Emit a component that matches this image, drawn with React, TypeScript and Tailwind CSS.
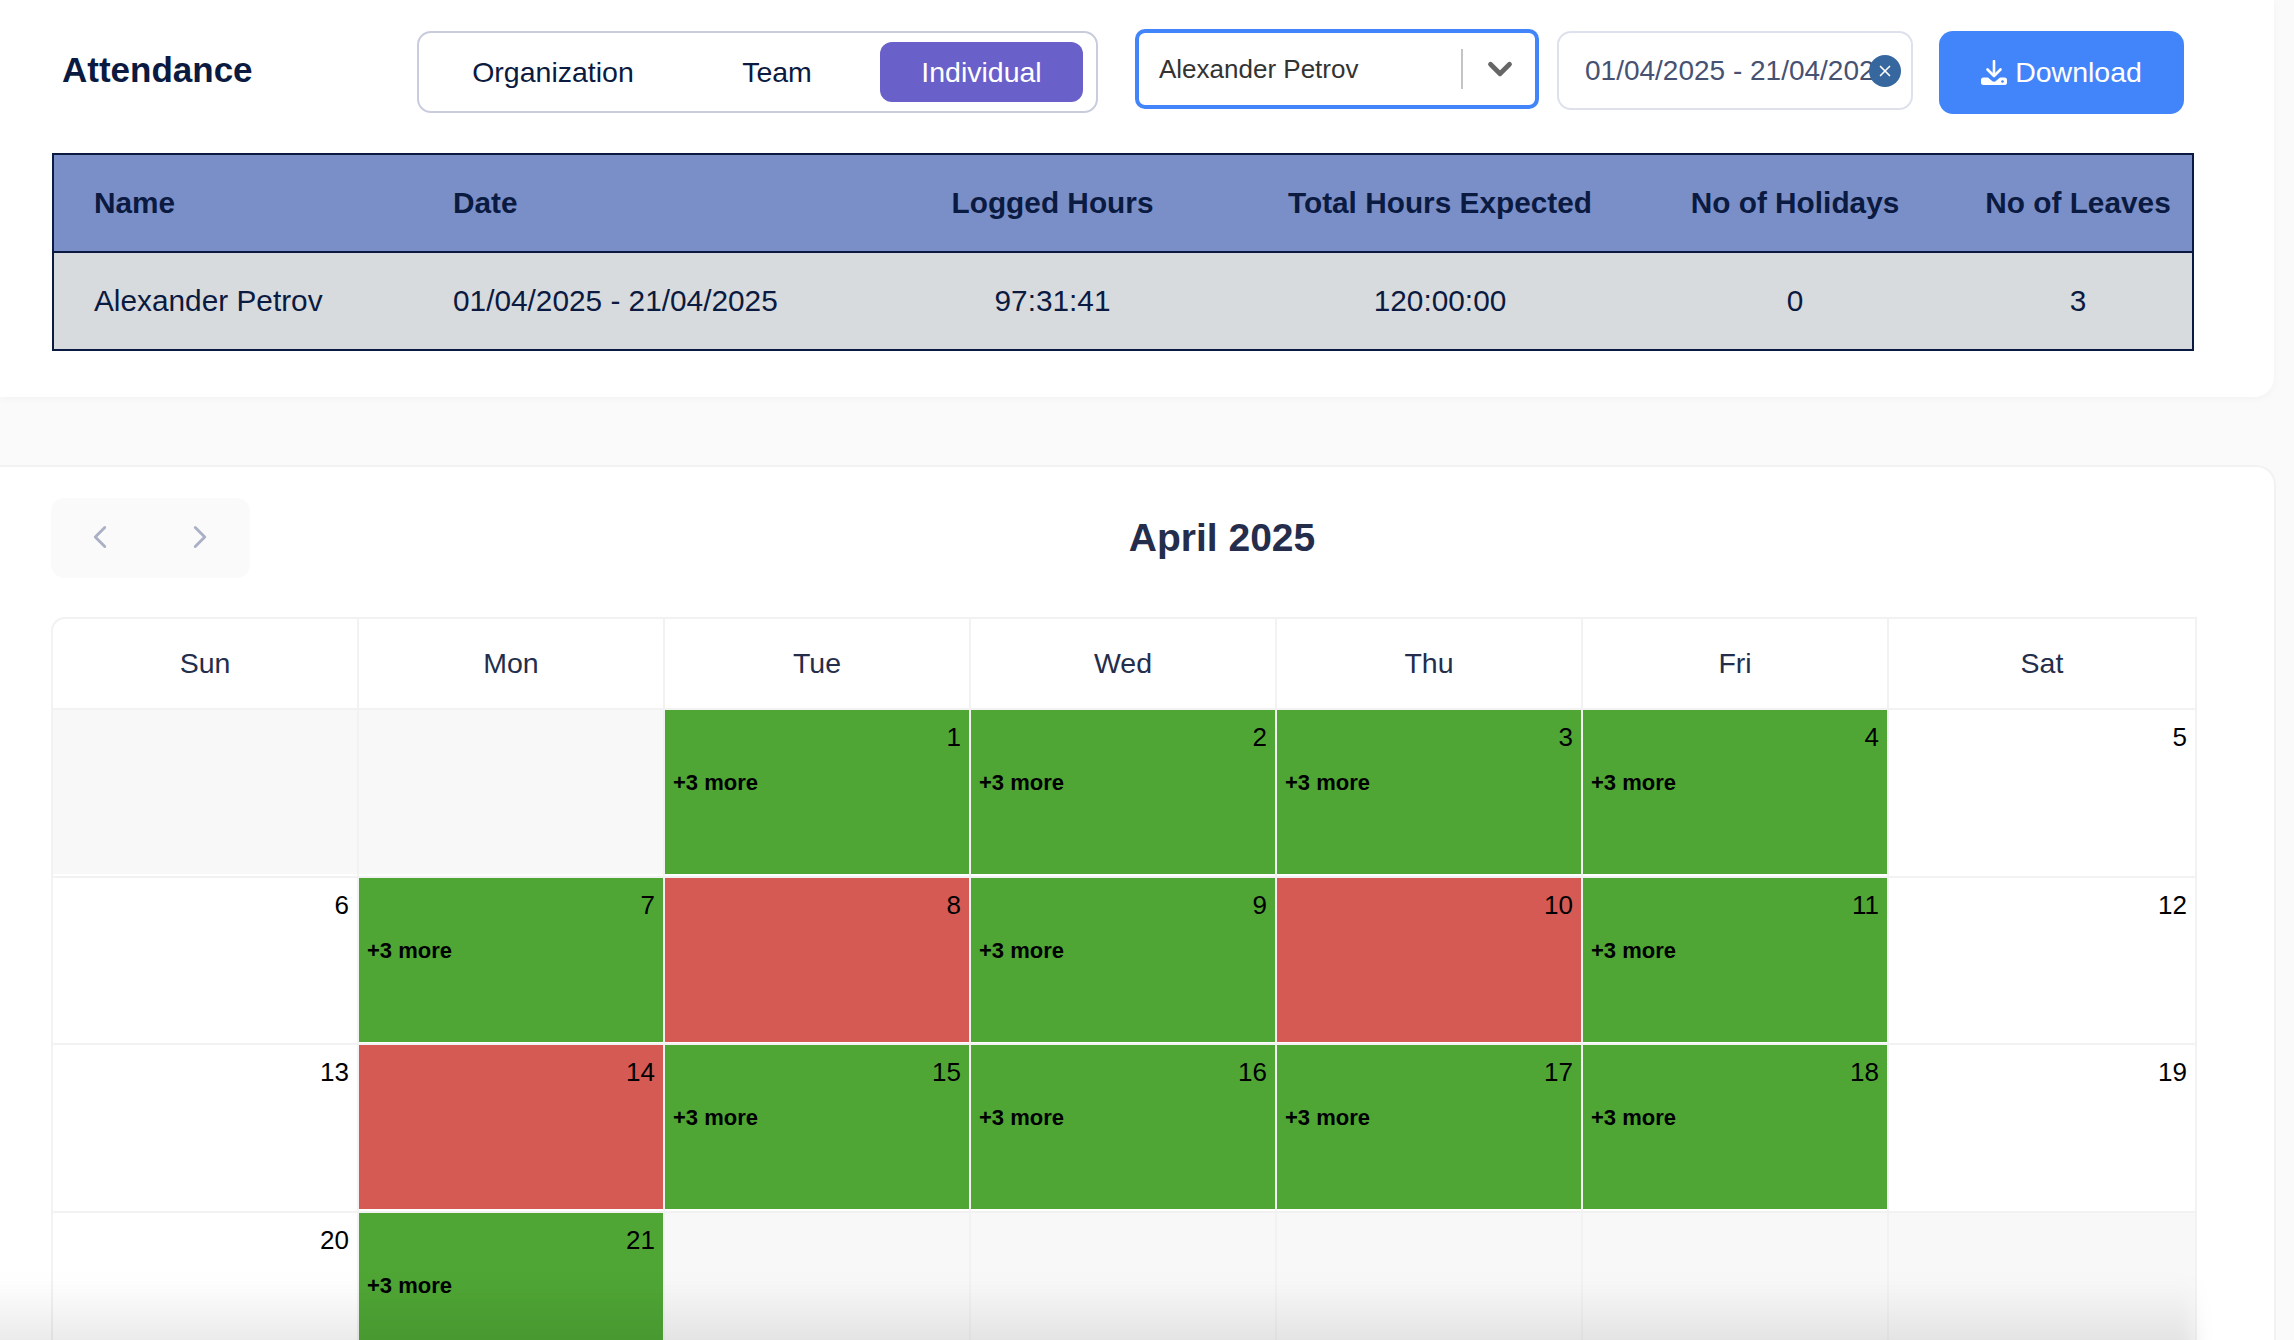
import { ChevronDown, ChevronLeft, ChevronRight, X } from 'lucide-react';

type DayStatus = 'present' | 'leave' | 'weekend' | 'blank';

const weekdays = ['Sun', 'Mon', 'Tue', 'Wed', 'Thu', 'Fri', 'Sat'];

const days: { day?: number; status: DayStatus }[] = [
  { status: 'blank' },
  { status: 'blank' },
  { day: 1, status: 'present' },
  { day: 2, status: 'present' },
  { day: 3, status: 'present' },
  { day: 4, status: 'present' },
  { day: 5, status: 'weekend' },
  { day: 6, status: 'weekend' },
  { day: 7, status: 'present' },
  { day: 8, status: 'leave' },
  { day: 9, status: 'present' },
  { day: 10, status: 'leave' },
  { day: 11, status: 'present' },
  { day: 12, status: 'weekend' },
  { day: 13, status: 'weekend' },
  { day: 14, status: 'leave' },
  { day: 15, status: 'present' },
  { day: 16, status: 'present' },
  { day: 17, status: 'present' },
  { day: 18, status: 'present' },
  { day: 19, status: 'weekend' },
  { day: 20, status: 'weekend' },
  { day: 21, status: 'present' },
  { status: 'blank' },
  { status: 'blank' },
  { status: 'blank' },
  { status: 'blank' },
  { status: 'blank' },
];

function DownloadIcon() {
  return (
    <svg width="26" height="26" viewBox="0 0 26 26" fill="none" className="shrink-0">
      <path d="M13 1v14" stroke="white" strokeWidth="2.6" strokeLinecap="round" />
      <path d="M6.500 9.500 13 16l6.500-6.500" stroke="white" strokeWidth="2.6" strokeLinecap="round" strokeLinejoin="round" />
      <path
        d="M2.500 17.500H7l3.500 3a3.500 3.500 0 0 0 5 0l3.500-3h4.500A2.500 2.500 0 0 1 26 20v2.500a2.500 2.500 0 0 1-2.500 2.500h-21A2.500 2.500 0 0 1 0 22.500V20a2.500 2.500 0 0 1 2.500-2.500z"
        fill="white"
      />
      <circle cx="21.500" cy="21.500" r="1.300" fill="#4285fb" />
    </svg>
  );
}

function DayCell({ day, status }: { day?: number; status: DayStatus }) {
  const bg =
    status === 'present'
      ? 'bg-[#4fa635]'
      : status === 'leave'
        ? 'bg-[#d55a54]'
        : status === 'blank'
          ? 'bg-[#f8f8f8]'
          : 'bg-white';
  return (
    <div className="h-[167.5px] border-t-2 border-r-2 border-[#f2f2f2]">
      <div className={`h-[164px] flex flex-col px-2 pt-2.5 text-black ${bg}`}>
        {day && <div className="text-right text-[26px] leading-[34px]">{day}</div>}
        {status === 'present' && (
          <div className="mt-[16px] text-[22px] leading-[26px] font-bold">+3 more</div>
        )}
      </div>
    </div>
  );
}

export default function App() {
  return (
    <div className="relative h-[1340px] w-[2294px] overflow-hidden bg-[#fafafa] font-['Liberation_Sans',Arial,sans-serif] text-[#0b1a40]">
      <div className="w-[2274px] h-[397px] bg-white rounded-br-[20px] shadow-[0_2px_8px_rgba(0,0,0,0.03)] pl-[52px] pr-[79px] pt-[29px]">
        <div className="flex items-start">
          <h1 className="w-[365px] pl-[10px] pt-[21px] text-[35px] leading-[40px] font-bold">Attendance</h1>
          <div className="mt-[2px] w-[681px] h-[82px] flex items-center border-2 border-[#c8ccdc] rounded-[14px] pl-[13px] text-[28.5px]">
            <button className="w-[242px] text-center">Organization</button>
            <button className="w-[206px] text-center">Team</button>
            <button className="w-[203px] h-[60px] bg-[#6a60c9] text-white rounded-[12px] text-center">Individual</button>
          </div>
          <div className="ml-[37px] w-[404px] h-[80px] flex items-center border-[4px] border-[#4285fb] rounded-[10px] text-[#333] pl-[20px]">
            <span className="flex-1 text-[26px]">Alexander Petrov</span>
            <span className="w-[2px] h-[40px] bg-[#c4c4c4]" />
            <span className="w-[72px] pl-[2px] flex justify-center text-[#666]">
              <ChevronDown size={38} strokeWidth={3} />
            </span>
          </div>
          <div className="relative ml-[18px] mt-[2px] w-[356px] h-[79px] border-2 border-[#dee1ec] rounded-[14px] pl-[26px] pt-[21px] text-[28px] leading-[34px] text-[#475273] overflow-hidden whitespace-nowrap">
            01/04/2025 - 21/04/2025
            <span className="absolute right-[10px] top-[22px] w-[32px] h-[32px] rounded-full bg-[#36679f] flex items-center justify-center text-white">
              <X size={18} strokeWidth={2.2} />
            </span>
          </div>
          <button className="ml-[26px] mt-[2px] w-[245px] h-[83px] bg-[#4285fb] rounded-[14px] flex items-center justify-center gap-[8px] text-white text-[28.5px]">
            <DownloadIcon />
            Download
          </button>
        </div>

        <table className="mt-[39px] w-[2142px] table-fixed border-collapse border-2 border-[#0b1a40] text-[29.8px]">
          <thead>
            <tr className="h-[98px] bg-[#7a8fc8] border-b-2 border-[#0b1a40] font-bold">
              <th className="w-[360px] pl-[40px] text-left">Name</th>
              <th className="w-[441px] pl-[40px] text-left">Date</th>
              <th className="w-[397px] text-center">Logged Hours</th>
              <th className="w-[378px] text-center">Total Hours Expected</th>
              <th className="w-[332px] text-center">No of Holidays</th>
              <th className="pl-[3px] text-center">No of Leaves</th>
            </tr>
          </thead>
          <tbody>
            <tr className="h-[98px] bg-[#d8dbde]">
              <td className="pl-[40px]">Alexander Petrov</td>
              <td className="pl-[40px]">01/04/2025 - 21/04/2025</td>
              <td className="text-center">97:31:41</td>
              <td className="text-center">120:00:00</td>
              <td className="text-center">0</td>
              <td className="pl-[3px] text-center">3</td>
            </tr>
          </tbody>
        </table>
      </div>

      <div className="mt-[68px] w-[2276px] h-[900px] bg-white rounded-tr-[20px] border-t-2 border-r-2 border-[#f2f2f2] pl-[51px] pt-[31px]">
        <div className="relative flex items-center h-[80px] w-[2144px]">
          <div className="w-[199px] h-[80px] bg-[#fafafa] rounded-[14px] flex items-center justify-between pl-[30px] pr-[31px] pb-[3px] text-[#aab0c6]">
            <ChevronLeft size={38} strokeWidth={1.8} />
            <ChevronRight size={38} strokeWidth={1.8} />
          </div>
          <h2 className="absolute left-[1171px] -translate-x-1/2 text-[39px] leading-[46px] font-bold text-[#242e4c]">April 2025</h2>
        </div>

        <div className="mt-[39px] w-[2146px] border-l-2 border-t-2 border-[#f2f2f2] rounded-tl-[14px]">
          <div className="grid grid-cols-[repeat(6,306px)_1fr]">
            {weekdays.map((name) => (
              <div key={name} className="h-[89px] border-r-2 border-[#f2f2f2] flex items-center justify-center text-[28.5px] text-[#242e4c]">
                {name}
              </div>
            ))}
          </div>
          <div className="grid grid-cols-[repeat(6,306px)_1fr]">
            {days.map((d, i) => (
              <DayCell key={i} day={d.day} status={d.status} />
            ))}
          </div>
        </div>
      </div>

      <div className="absolute left-[-40px] bottom-[-24px] w-[2235px] h-[84px] bg-gradient-to-t from-black/[0.11] to-transparent blur-[10px] pointer-events-none" />
    </div>
  );
}
